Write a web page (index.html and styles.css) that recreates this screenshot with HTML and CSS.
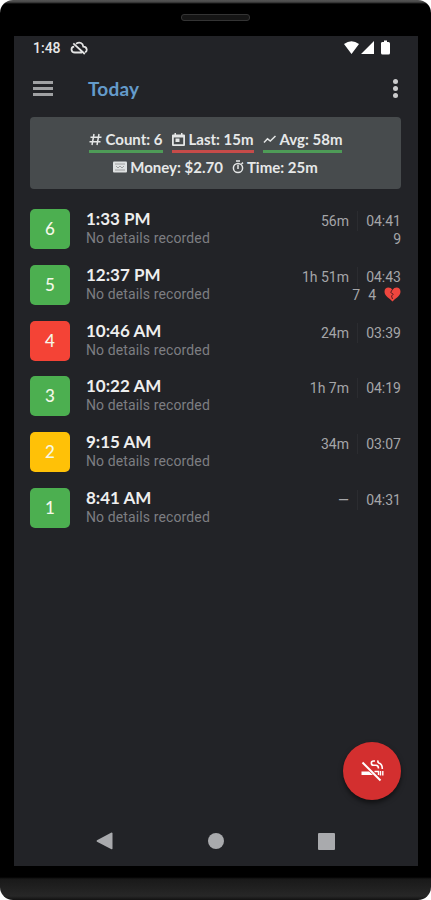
FILE: index.html
```
<!DOCTYPE html>
<html lang="en">
<head>
<meta charset="utf-8">
<title>Today</title>
<link rel="stylesheet" href="styles.css">
</head>
<body>
<div class="phone">
  <div class="speaker"></div>
  <main class="screen">
    <div class="status">
      <span class="clock">1:48</span>
      <svg class="cloud" width="18" height="14" viewBox="0 0 18 14" fill="none" stroke="#e4e4e4" stroke-width="1.8"><path d="M6 2.7C10 .4 12.8 2.2 13.3 5.6C17.300 5.700 17.600 10.400 15 11.200M12 11.500H5C.5 11.500.5 6 4.200 5.700M3.300 2.400L14.800 13"/></svg>
      <svg class="signals" width="48" height="16" viewBox="0 0 48 16" fill="#fff"><path d="M1 4Q8.500-1.500 16 4L8.500 14ZM31 1V14H18ZM39 2H41V.5H44V2H45.500Q47 2 47 3.500V13Q47 14.500 45.500 14.500H39.500Q38 14.500 38 13V3.500Q38 2 39 2Z"/></svg>
    </div>
    <header class="appbar">
      <div class="menu"><i></i><i></i><i></i></div>
      <h1>Today</h1>
      <div class="more"><i></i><i></i><i></i></div>
    </header>
    <section class="summary">
      <div class="stats first">
        <span class="stat good"><svg width="13" height="13" viewBox="0 0 13 13" fill="none" stroke="#e4e6e6" stroke-width="1.500"><path d="M5 1L3 12M10 1L8 12M1.500 4.200H12.500M.500 8.700H11.500"/></svg><b>Count: 6</b></span>
        <span class="stat bad"><svg width="13" height="13" viewBox="0 0 13 13"><path fill="#e4e6e6" fill-rule="evenodd" d="M2.500 0H4V1.500H9V0H10.500V1.500H12Q13 1.500 13 2.500V12Q13 13 12 13H1Q0 13 0 12V2.500Q0 1.500 1 1.500H2.500ZM1.800 4.500V11.300H11.200V4.500ZM3.500 5.500H7.500V9H3.500Z"/></svg><b>Last: 15m</b></span>
        <span class="stat good"><svg width="13" height="13" viewBox="0 0 13 13" fill="none" stroke="#e4e6e6" stroke-width="1.500"><path d="M1 9.500L4.500 5.800L7.300 8L12.500 3"/></svg><b>Avg: 58m</b></span>
      </div>
      <div class="stats second">
        <span class="stat"><svg width="14" height="12" viewBox="0 0 14 12"><rect y=".5" width="14" height="11" rx="1" fill="#dfe2e2"/><path d="M2 3H12M2 9H12M3 5L5 7L7 5L9 7L11 5" fill="none" stroke="#8d9191" stroke-width=".8"/></svg><b>Money: $2.70</b></span>
        <span class="stat"><svg width="12" height="14" viewBox="0 0 12 14" fill="none" stroke="#e4e6e6" stroke-width="1.500"><circle cx="6" cy="8" r="4.600"/><path d="M4 .9H8M6 4.800V9M9.500 4L11 2.600"/></svg><b>Time: 25m</b></span>
      </div>
    </section>
    <section class="list">
      <article><div class="num green">6</div><div class="info"><h2>1:33 PM</h2><p>No details recorded</p></div><div class="meta"><div class="times"><span>56m</span><span class="dur">04:41</span></div><div class="extra">9</div></div></article>
      <article><div class="num green">5</div><div class="info"><h2>12:37 PM</h2><p>No details recorded</p></div><div class="meta"><div class="times"><span>1h 51m</span><span class="dur">04:43</span></div><div class="extra"><span>7</span><span>4</span><svg width="17" height="15" viewBox="0 0 17 15"><path fill="#ef463e" d="M8.500 3C6.500-.5.500-.4.500 4.700C.500 9 6 11.500 8.500 14.500C11 11.500 16.500 9 16.500 4.700C16.500-.4 10.500-.5 8.500 3Z"/><path d="M8.300 2.500L6.700 5.500L9.300 7.200L7.500 9L8.500 12" fill="none" stroke="#5b1d20" stroke-width="1"/></svg></div></div></article>
      <article><div class="num red">4</div><div class="info"><h2>10:46 AM</h2><p>No details recorded</p></div><div class="meta"><div class="times"><span>24m</span><span class="dur">03:39</span></div></div></article>
      <article><div class="num green">3</div><div class="info"><h2>10:22 AM</h2><p>No details recorded</p></div><div class="meta"><div class="times"><span>1h 7m</span><span class="dur">04:19</span></div></div></article>
      <article><div class="num amber">2</div><div class="info"><h2>9:15 AM</h2><p>No details recorded</p></div><div class="meta"><div class="times"><span>34m</span><span class="dur">03:07</span></div></div></article>
      <article><div class="num green">1</div><div class="info"><h2>8:41 AM</h2><p>No details recorded</p></div><div class="meta"><div class="times"><span>—</span><span class="dur">04:31</span></div></div></article>
    </section>
    <button class="fab" aria-label="Add"><svg width="24" height="24" viewBox="0 0 24 24" fill="none" stroke="#fff" stroke-width="1.800"><path d="M2.500 3.500L20.500 21.500" stroke-width="2"/><path d="M1.500 12.500H9L13 16H1.500Z" fill="#fff" stroke="none"/><path d="M14.500 12.500H18.500V16M20.500 12V16.500M22.800 12V16.500" stroke-width="1.400"/><path d="M15 2H13.500C10.500 2 10.800 6.200 13.500 6.200H16C18 6.200 18.500 7.500 18.500 9.500M18.300 1.500C17.200 3.200 18.500 4 20 4.500C22 5.500 22.300 7 22.300 10" stroke-width="1.600"/></svg></button>
    <nav class="nav">
      <svg width="17" height="18" viewBox="0 0 17 18"><path fill="#a9aaad" d="M15.500.500Q16.500.500 16.500 1.500V16.500Q16.500 17.500 15.500 17.200L1 9.700Q0 9 1 8.300Z"/></svg>
      <i class="home"></i>
      <i class="recent"></i>
    </nav>
  </main>
</div>
</body>
</html>
```
FILE: styles.css
```
* { box-sizing: border-box; }
body { margin: 0; background: #fff; font-family: Lato, "Liberation Sans", sans-serif; }
h1, h2, p { margin: 0; }
.phone { width: 431px; height: 900px; padding: 36px 13px 0 14px; border-radius: 13px; background: linear-gradient(#555 0, #484848 2px, #000 4px, #000 877px, #191919 879px, #272727 896px, #111 900px); position: relative; overflow: hidden; }
.speaker { position: absolute; left: 181px; top: 14px; width: 69px; height: 7px; border: 1px solid #343434; border-radius: 3px; background: #151515; }
.screen { height: 830px; position: relative; background: #222327; display: flex; flex-direction: column; }
.status { height: 24px; padding-left: 19px; display: flex; align-items: center; color: #e7e7e7; }
.clock { font: 500 14px/24px Roboto, sans-serif; width: 37px; }
.signals { margin-left: auto; margin-right: 27px; }
.appbar { height: 57px; padding: 0 20px 0 19px; display: flex; align-items: center; }
.menu { width: 20px; height: 15px; display: flex; flex-direction: column; justify-content: space-between; }
.menu i { height: 3px; background: #a0a1a3; }
h1 { margin-left: 35px; color: #649bcb; font-size: 19px; line-height: 24px; font-weight: 700; letter-spacing: .2px; }
.more { margin-left: auto; display: flex; flex-direction: column; gap: 2px; }
.more i { width: 5px; height: 5px; border-radius: 50%; background: #cbcbcc; }
.summary { height: 72px; margin: 0 17px 0 16px; padding-top: 11px; border-radius: 4px; background: #474b4d; color: #e6e8e8; }
.stats { display: flex; justify-content: center; gap: 9px; }
.stat { height: 25px; display: flex; align-items: center; gap: 4px; white-space: nowrap; border-bottom: 3px solid transparent; }
.stat b { font-size: 15px; line-height: 20px; font-weight: 700; }
.stat svg { flex: none; }
.good { border-color: #4e9b57; }
.bad { border-color: #c64b49; }
.second .stat { height: 30px; gap: 3px; }
.list { padding: 20px 17px 0 16px; }
article { height: 55.800px; display: flex; }
.num { width: 40px; height: 40px; border-radius: 5px; display: grid; place-items: center; color: #f5f8e9; font-size: 17px; line-height: 20px; font-weight: 500; }
.green { background: #4caf50; }
.red { background: #f44336; }
.amber { background: #ffc107; }
.info { margin-left: 16px; }
h2 { font-size: 17px; line-height: 20px; color: #eee; font-weight: 700; }
p { font: 14px/19px Roboto, sans-serif; letter-spacing: .12px; color: #7d7e82; white-space: nowrap; }
.meta { margin-left: auto; color: #a5a6a9; font: 14px/18px Roboto, sans-serif; }
.times { display: flex; justify-content: flex-end; height: 20px; padding-top: 3px; }
.dur { margin-left: 8px; border-left: 1px solid #2b2c30; width: 44px; height: 20px; margin-top: -1px; padding-top: 1px; text-align: right; }
.extra { height: 20px; display: flex; justify-content: flex-end; gap: 8px; align-items: center; }
.fab { position: absolute; right: 17px; bottom: 66px; width: 58px; height: 58px; border: 0; border-radius: 50%; padding: 0; background: #d32f2f; box-shadow: 0 3px 5px #0008; display: grid; place-items: center; }
.nav { margin-top: auto; height: 50px; padding: 0 83px 0 82px; display: flex; justify-content: space-between; align-items: center; }
.home { width: 16px; height: 16px; border-radius: 50%; background: #a9aaad; }
.recent { width: 17px; height: 17px; border-radius: 1px; background: #a9aaad; }
```
